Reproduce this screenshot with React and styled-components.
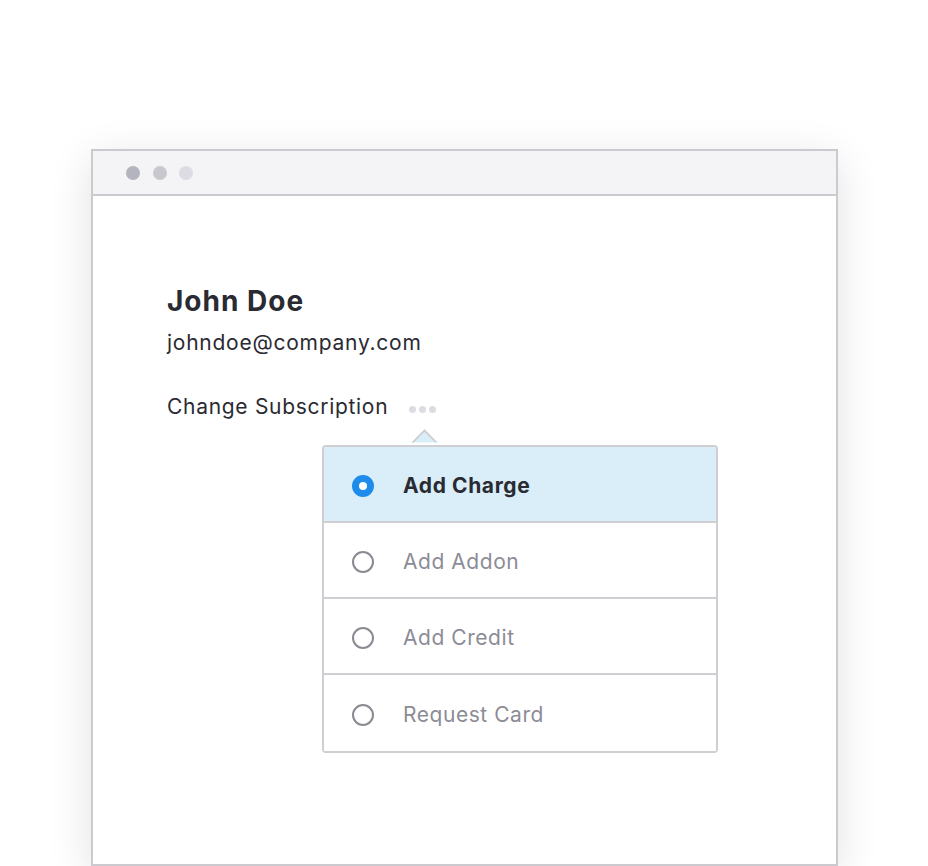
import React from 'react';
import styled, { createGlobalStyle } from 'styled-components';

const Global = createGlobalStyle`
    html, body {
        margin: 0;
        padding: 0;
        background: #fff;
        font-family: 'Inter', 'Noto Sans', sans-serif;
        -webkit-font-smoothing: antialiased;
    }
`;

const Page = styled.div`
    width: 928px;
    height: 866px;
    overflow: hidden;
    padding: 149px 0 0 91px;
    box-sizing: border-box;
`;

const Window = styled.div` /* browser frame */
    width: 747px;
    height: 717px;
    box-sizing: border-box;
    border: 2px solid #cbcbcf;
    background: #fff;
    box-shadow: 0 10px 40px rgba(0, 0, 0, 0.12);
    display: flex;
    flex-direction: column;
`;

const TitleBar = styled.div`
    height: 43px;
    flex-shrink: 0;
    background: #f4f4f6;
    border-bottom: 2px solid #cbcbcf;
    display: flex;
    align-items: center;
    gap: 12.5px;
    padding-left: 33px;
`;

const Dot = styled.span`
    width: 14px;
    height: 14px;
    border-radius: 50%;
    background: ${p => p.color};
`;

const Body = styled.div`
    padding: 88px 0 0 74px;
    color: #2a2a32;
`;

const Name = styled.h1`
    margin: 0;
    font-size: 28px;
    font-weight: 700;
    line-height: 34px;
    letter-spacing: 1px;
`;

const Email = styled.div`
    margin-top: 12px;
    font-size: 21px;
    line-height: 26px;
    letter-spacing: 0.75px;
`;

const ActionRow = styled.div`
    margin-top: 38px;
    display: flex;
    align-items: center;
    gap: 21px;
    font-size: 21px;
    line-height: 26px;
    letter-spacing: 0.7px;
`;

const Ellipsis = styled.span`
    display: flex;
    gap: 3px;
    margin-top: 4px;
    span {
        width: 7px;
        height: 7px;
        border-radius: 50%;
        background: #dcdce2;
    }
`;

const Menu = styled.div`
    position: relative;
    margin: 25px 0 0 155px;
    width: 396px;
    border: 2px solid #cfcfd3;
    border-radius: 4px;
    box-sizing: border-box;
    background: #fff;
`;

/* upper half of a rotated square, so the menu border runs under it */
const Arrow = styled.span`
    position: absolute;
    top: -14px;
    left: 90.5px;
    width: 19px;
    height: 19px;
    box-sizing: border-box;
    background: #d9eef9;
    border-left: 2px solid #cfcfd3;
    border-top: 2px solid #cfcfd3;
    transform: rotate(45deg);
    clip-path: polygon(0 0, 100% 0, 0 100%);
`;

const Item = styled.div`
    position: relative;
    height: 76px;
    display: flex;
    align-items: center;
    gap: 29px;
    padding: 3px 0 0 28px;
    box-sizing: border-box;
    font-size: 21px;
    letter-spacing: ${p => (p.active ? '0.6px' : '0.55px')};
    background: ${p => (p.active ? '#d9eef9' : '#fff')};
    color: ${p => (p.active ? '#2a2a32' : '#8c8c96')};
    font-weight: ${p => (p.active ? 700 : 400)};
    &:not(:last-child) {
        border-bottom: 2px solid #cfcfd3;
    }
    &:first-child {
        border-radius: 2px 2px 0 0;
    }
`;

const Radio = styled.span`
    width: 22px;
    height: 22px;
    border-radius: 50%;
    box-sizing: border-box;
    flex-shrink: 0;
    border: ${p => (p.checked ? '7px solid #1e8ceb' : '2px solid #8a8a92')};
    background: #fff;
`;

const items = ['Add Charge', 'Add Addon', 'Add Credit', 'Request Card'];

export default function App() {
    return (
        <Page>
            <Global />
            <Window>
                <TitleBar>
                    <Dot color="#b4b4be" />
                    <Dot color="#c7c7cf" />
                    <Dot color="#dcdce2" />
                </TitleBar>
                <Body>
                    <Name>John Doe</Name>
                    <Email>johndoe@company.com</Email>
                    <ActionRow>
                        Change Subscription
                        <Ellipsis><span /><span /><span /></Ellipsis>
                    </ActionRow>
                    <Menu>
                        <Arrow />
                        {items.map((label, i) => (
                            <Item key={label} active={i === 0}>
                                <Radio checked={i === 0} />
                                {label}
                            </Item>
                        ))}
                    </Menu>
                </Body>
            </Window>
        </Page>
    );
}
